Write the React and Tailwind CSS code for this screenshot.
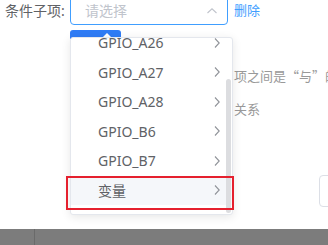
import React from 'react';

const items = ['GPIO_A26', 'GPIO_A27', 'GPIO_A28', 'GPIO_B6', 'GPIO_B7', '变量'];

const Chevron = ({ up }) => (
    <svg width="12" height="12" viewBox="0 0 12 12" fill="none" stroke="currentColor" strokeWidth="1.1">
        {up ? <path d="M1.5 8L6 3.8L10.5 8" /> : <path d="M4 1.5L8.2 6L4 10.5" />}
    </svg>
);

const App = () => {
    return (
        <div
            className="w-[328px] h-[245px] relative overflow-hidden bg-white flex flex-col"
            style={{ fontFamily: '"Noto Sans", "Noto Sans CJK SC", sans-serif' }}
        >
            {/* Form row */}
            <div className="flex items-center mt-[-7px] h-[32px]">
                <span className="ml-[5px] w-[65px] text-[14px] text-[#606266] mt-[3px]">条件子项:</span>
                <div className="w-[158px] h-[32px] border border-[#409eff] rounded-[4px] flex items-center justify-between pl-[14px] pr-[9px]">
                    <span className="text-[14px] text-[#c0c4cc] mt-[2px]">请选择</span>
                    <span className="text-[#c0c4cc] mt-[3px]"><Chevron up /></span>
                </div>
                <span className="ml-[6px] text-[13px] text-[#409eff] mt-[3px]">删除</span>
            </div>

            {/* Hint text, partly under the dropdown */}
            <div
                className="ml-[234px] mt-[34px] text-[13px] text-[#999] leading-[33px] whitespace-nowrap"
                style={{ fontFamily: '"Noto Sans CJK SC", sans-serif' }}
            >
                <div>项之间是“与”的关系</div>
                <div>关系</div>
            </div>

            <div className="ml-[319px] mt-[50px] w-[40px] h-[32px] border border-[#dcdfe6] rounded-[4px]" />

            <div className="mt-auto h-[16px] bg-[#7c7c7c] flex">
                <div className="w-[35px] border-r border-[#6a6a6a]" />
            </div>

            {/* Blue tab behind popper */}
            <div className="absolute left-[70px] top-[30px] w-[51px] h-[9px] bg-[#2f7cf6] rounded-t-[3px]" />
            <div className="absolute left-[102px] top-[33px] w-0 h-0 border-l-[5px] border-r-[5px] border-b-[5px] border-l-transparent border-r-transparent border-b-white" />

            {/* Dropdown */}
            <div className="absolute left-[70px] top-[37px] w-[163px] h-[178px] bg-white border border-[#e4e7ed] rounded-[3px] shadow-[0_2px_10px_rgba(0,0,0,0.1)] overflow-hidden">
                <div className="mt-[-10px]">
                    {items.map((it, i) => (
                        <div
                            key={it}
                            className={`h-[29.5px] flex items-center justify-between pl-[27px] pr-[9px] text-[14px] text-[#606266] ${i === items.length - 1 ? 'bg-[#f5f7fa]' : ''}`}
                        >
                            <span>{it}</span>
                            <span className="text-[#909399]"><Chevron /></span>
                        </div>
                    ))}
                </div>
                <div className="absolute right-[1px] top-[41px] w-[5px] h-[134px] bg-[#dcdde0] rounded-[3px]" />
            </div>

            {/* Red highlight frame */}
            <div className="absolute left-[66px] top-[176px] w-[168px] h-[34px] border-2 border-[#e5202e]" />
        </div>
    );
};

export default App;
